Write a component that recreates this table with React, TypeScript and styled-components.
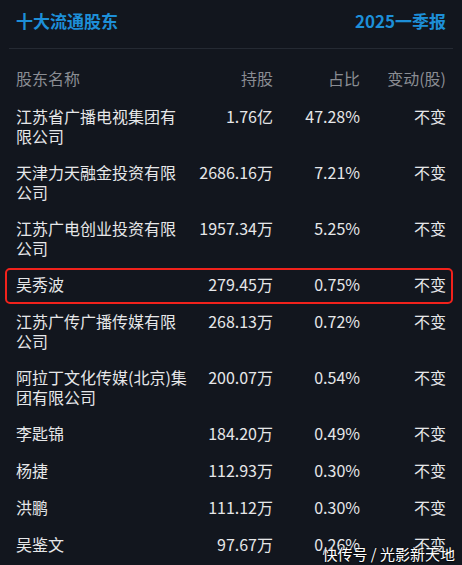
import styled, { createGlobalStyle } from "styled-components";

type Holder = {
  name: string;
  shares: string;
  ratio: string;
  change: string;
  highlighted?: boolean;
};

const holders: Holder[] = [
  { name: "江苏省广播电视集团有限公司", shares: "1.76亿", ratio: "47.28%", change: "不变" },
  { name: "天津力天融金投资有限公司", shares: "2686.16万", ratio: "7.21%", change: "不变" },
  { name: "江苏广电创业投资有限公司", shares: "1957.34万", ratio: "5.25%", change: "不变" },
  { name: "吴秀波", shares: "279.45万", ratio: "0.75%", change: "不变", highlighted: true },
  { name: "江苏广传广播传媒有限公司", shares: "268.13万", ratio: "0.72%", change: "不变" },
  { name: "阿拉丁文化传媒(北京)集团有限公司", shares: "200.07万", ratio: "0.54%", change: "不变" },
  { name: "李匙锦", shares: "184.20万", ratio: "0.49%", change: "不变" },
  { name: "杨捷", shares: "112.93万", ratio: "0.30%", change: "不变" },
  { name: "洪鹏", shares: "111.12万", ratio: "0.30%", change: "不变" },
  { name: "吴鉴文", shares: "97.67万", ratio: "0.26%", change: "不变" },
];

export default function App() {
  return (
    <Page>
      <GlobalStyle />
      <TitleBar>
        <Title>十大流通股东</Title>
        <Title>2025一季报</Title>
      </TitleBar>
      <Divider />
      <HeadRow>
        <Cell>股东名称</Cell>
        <NumCell>持股</NumCell>
        <NumCell>占比</NumCell>
        <NumCell>变动(股)</NumCell>
      </HeadRow>
      {holders.map((h) => (
        <Row key={h.name} $highlighted={h.highlighted}>
          <Cell>{h.name}</Cell>
          <NumCell>{h.shares}</NumCell>
          <NumCell>{h.ratio}</NumCell>
          <NumCell>{h.change}</NumCell>
        </Row>
      ))}
      <Watermark>快传号 / 光影新天地</Watermark>
    </Page>
  );
}

const GlobalStyle = createGlobalStyle`
  html, body {
    margin: 0;
    padding: 0;
    background: #12161e;
  }
`;

const Page = styled.div`
  position: relative;
  width: 462px;
  height: 565px;
  overflow: hidden;
  background: #12161e;
  font-family: "Noto Sans CJK SC", "Noto Sans", sans-serif;
  color: #e6e7e9;
`;

const TitleBar = styled.div`
  display: flex;
  justify-content: space-between;
  align-items: center;
  padding: 11px 16px 0 16px;
  height: 20px;
`;

const Title = styled.div`
  font-size: 17px;
  font-weight: 700;
  line-height: 20px;
  color: #1d8fd8;
`;

const Divider = styled.div`
  height: 1px;
  margin: 17px 9px 0 9px;
  background: #252a33;
`;

const columns = "172px 85px 87px 86px";

const HeadRow = styled.div`
  display: grid;
  grid-template-columns: ${columns};
  padding: 19px 16px 10px 16px;
  font-size: 16px;
  line-height: 20px;
  color: #8a8d93;
`;

const Row = styled.div<{ $highlighted?: boolean }>`
  position: relative;
  display: grid;
  grid-template-columns: ${columns};
  align-items: start;
  box-sizing: border-box;
  min-height: 37px;
  padding: 8px 16px;
  font-size: 16px;
  line-height: 20px;

  &::after {
    content: "";
    display: ${(p) => (p.$highlighted ? "block" : "none")};
    position: absolute;
    top: 2px;
    bottom: -1px;
    left: 5px;
    right: 9px;
    border: 2px solid #f2221c;
    border-radius: 5px;
  }
`;

const Cell = styled.div`
  padding-right: 0;
`;

const NumCell = styled.div`
  text-align: right;
  white-space: nowrap;
`;

const Watermark = styled.div`
  position: absolute;
  right: 7px;
  bottom: 2px;
  font-size: 15px;
  line-height: 18px;
  color: #ffffff;
  text-shadow: 0 0 2px rgba(0, 0, 0, 0.8), 0 1px 1px rgba(0, 0, 0, 0.6);
`;
